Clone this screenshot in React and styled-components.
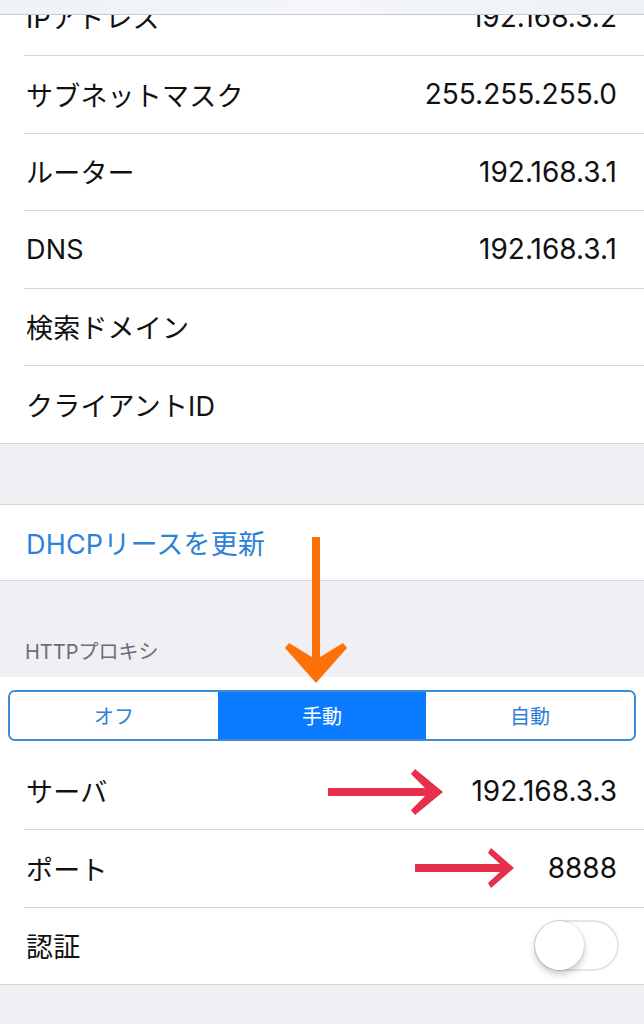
import React, { useState } from 'react';
import styled, { createGlobalStyle } from 'styled-components';

const GlobalStyle = createGlobalStyle`
  html, body {
    margin: 0;
    padding: 0;
    background: #efeff4;
  }
  body {
    font-family: Inter, "Noto Sans CJK JP", sans-serif;
    -webkit-font-smoothing: antialiased;
  }
`;

const Page = styled.div`
  position: relative;
  width: 644px;
  height: 1024px;
  overflow: hidden;
  background: #efeff4;
`;

const NavBar = styled.div`
  position: absolute;
  top: 0;
  left: 0;
  right: 0;
  height: 14px;
  background: linear-gradient(90deg, #eef3f9, #f4f6f9 50%, #eef2f7);
  border-bottom: 1.5px solid #c9c9cc;
  z-index: 2;
`;

const Section = styled.ul`
  list-style: none;
  margin: ${(p) => p.$top || 0}px 0 0;
  padding: 0;
  background: #fff;
  border-top: ${(p) => (p.$noTopLine ? 'none' : '1px solid #d6d6da')};
  border-bottom: 1px solid #d6d6da;
`;

const Row = styled.li`
  padding-left: 24px;
`;

const RowInner = styled.div`
  height: ${(p) => p.$h || 76.5}px;
  display: flex;
  align-items: center;
  justify-content: space-between;
  padding: 0 27px 0 2px;
  border-bottom: ${(p) => (p.$last ? 'none' : '1px solid #d6d6da')};
`;

const Label = styled.span`
  font-size: 27px;
  color: ${(p) => (p.$link ? '#2c82d8' : '#111')};
  letter-spacing: 0.2px;
`;

const Value = styled.span`
  font-size: 28px;
  color: #111;
`;

const Gap = styled.div`
  height: 60px;
`;

const SectionHeader = styled.div`
  height: 96px;
  display: flex;
  align-items: flex-end;
  padding: 0 25px 13px;
  box-sizing: border-box;
  font-size: 20px;
  line-height: 24px;
  color: #6d6d72;
`;

const SegmentWrap = styled.div`
  padding: 13px 8px 12px;
`;

const SegmentGroup = styled.div`
  display: grid;
  grid-template-columns: repeat(3, 1fr);
  height: 51px;
  border: 2px solid #3a8bd6;
  border-radius: 7px;
  overflow: hidden;
  box-sizing: border-box;
`;

const Segment = styled.button`
  border: none;
  margin: 0;
  padding: 0;
  font-family: inherit;
  font-size: 20px;
  background: ${(p) => (p.$active ? '#0a7aff' : '#fff')};
  color: ${(p) => (p.$active ? '#fff' : '#2f80d3')};
  cursor: pointer;
`;

const Track = styled.div`
  width: 85px;
  height: 51px;
  border-radius: 26px;
  border: 2px solid #e5e5e8;
  box-sizing: border-box;
  background: #fff;
  display: flex;
  align-items: center;
  justify-content: ${(p) => (p.$on ? 'flex-end' : 'flex-start')};
  margin-right: -2px;
`;

const Knob = styled.div`
  width: 49px;
  height: 49px;
  margin: 0 -1px;
  border-radius: 50%;
  background: #fff;
  box-shadow: 0 4px 7px rgba(0, 0, 0, 0.22), 0 0 0 1px rgba(0, 0, 0, 0.07);
`;

const Overlay = styled.svg`
  position: absolute;
  left: 0;
  top: 0;
  width: 644px;
  height: 1024px;
  pointer-events: none;
  z-index: 3;
`;

const info = [
  ['IPアドレス', '192.168.3.2'],
  ['サブネットマスク', '255.255.255.0'],
  ['ルーター', '192.168.3.1'],
  ['DNS', '192.168.3.1'],
  ['検索ドメイン', ''],
  ['クライアントID', ''],
];

const modes = ['オフ', '手動', '自動'];

export default function App() {
  const [mode, setMode] = useState(1);
  const [auth, setAuth] = useState(false);

  return (
    <Page>
      <GlobalStyle />
      <NavBar />

      <Section $top={-21.5} $noTopLine>
        {info.map(([label, value], i) => (
          <Row key={label}>
            <RowInner $last={i === info.length - 1}>
              <Label>{label}</Label>
              <Value>{value}</Value>
            </RowInner>
          </Row>
        ))}
      </Section>

      <Gap />

      <Section>
        <Row>
          <RowInner $last $h={75}>
            <Label $link>DHCPリースを更新</Label>
          </RowInner>
        </Row>
      </Section>

      <SectionHeader>HTTPプロキシ</SectionHeader>

      <Section $noTopLine>
        <SegmentWrap>
          <SegmentGroup>
            {modes.map((m, i) => (
              <Segment key={m} $active={mode === i} onClick={() => setMode(i)}>
                {m}
              </Segment>
            ))}
          </SegmentGroup>
        </SegmentWrap>
        <Row>
          <RowInner>
            <Label>サーバ</Label>
            <Value>192.168.3.3</Value>
          </RowInner>
        </Row>
        <Row>
          <RowInner>
            <Label>ポート</Label>
            <Value>8888</Value>
          </RowInner>
        </Row>
        <Row>
          <RowInner $last>
            <Label>認証</Label>
            <Track $on={auth} onClick={() => setAuth(!auth)}>
              <Knob />
            </Track>
          </RowInner>
        </Row>
      </Section>

      {/* annotation arrows drawn over the screenshot */}
      <Overlay viewBox="0 0 644 1024">
        <path
          d="M312 537 H320 V657 L343 643 L347 648 L316 683 L285 648 L289 643 L312 657 Z"
          fill="#fd7208"
        />
        <path
          d="M328 788 H425 L411 774 L415 769 L443 792 L415 815 L411 810 L425 796 H328 Z"
          fill="#e62f4b"
        />
        <path
          d="M415 864 H500 L488 853 L491 848 L514 868 L491 888 L488 883 L500 872 H415 Z"
          fill="#e62f4b"
        />
      </Overlay>
    </Page>
  );
}
